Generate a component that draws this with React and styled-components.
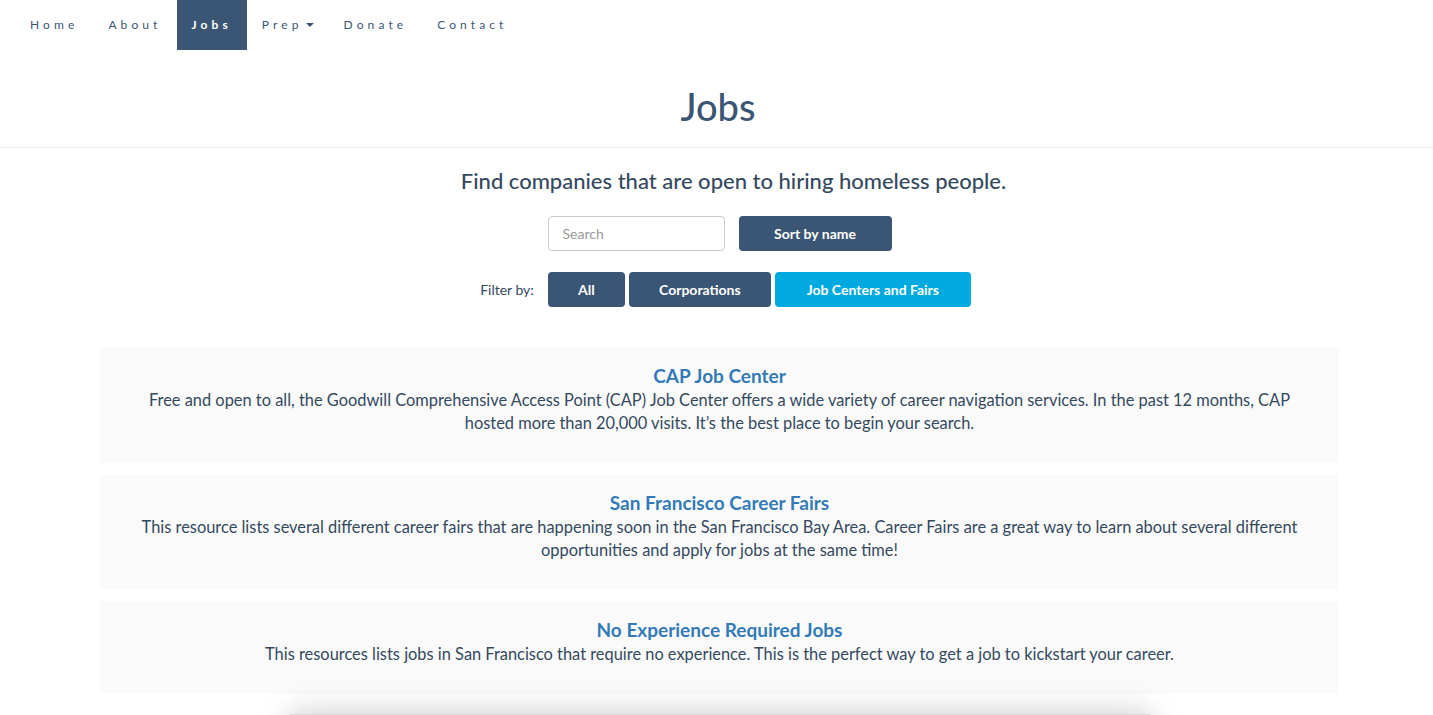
import React from 'react'
import styled, { createGlobalStyle } from 'styled-components'

const GlobalStyle = createGlobalStyle`
  body {
    margin: 0;
    background: #fff;
    font-family: Lato, "Noto Sans", sans-serif;
    color: #34495e;
  }
`

const Nav = styled.nav`
  height: 50px;
  display: flex;
  padding-left: 15px;
`

const NavItem = styled.a`
  display: flex;
  align-items: center;
  padding: 0 15px 2px;
  font-size: 12px;
  letter-spacing: 4.1px;
  color: ${({ active }) => (active ? '#fff' : '#3a5674')};
  background: ${({ active }) => (active ? '#3a5674' : 'transparent')};
  font-weight: ${({ active }) => (active ? 700 : 400)};
  text-decoration: none;
`

const Caret = styled.span`
  display: inline-block;
  margin: 1px 0 0 3px;
  width: 0;
  height: 0;
  border-left: 4px solid transparent;
  border-right: 4px solid transparent;
  border-top: 4px solid #3a5674;
`

const Header = styled.header`
  height: 97px;
  display: flex;
  align-items: center;
  justify-content: center;
  border-bottom: 1px solid #eaeaea;
`

const Title = styled.h1`
  margin: 14px 0 0 3px;
  font-size: 38px;
  font-weight: 500;
  color: #3a5674;
`

const Main = styled.main`
  margin: 0 94px 0 100px;
  display: flex;
  flex-direction: column;
  align-items: center;
`

const Lead = styled.h2`
  margin: 19px 0 0 28px;
  font-size: 22px;
  font-weight: 500;
  color: #34495e;
`

const Controls = styled.div`
  margin-top: 22px;
  display: flex;
  gap: 14px;
`

const SearchInput = styled.input`
  box-sizing: border-box;
  width: 177px;
  height: 35px;
  padding: 0 14px;
  border: 1px solid #ccc;
  border-radius: 4px;
  font-family: inherit;
  font-size: 14px;
  color: #555;
  &::placeholder {
    color: #999;
  }
`

const Button = styled.button`
  height: 35px;
  width: ${({ w }) => w}px;
  border: none;
  border-radius: 4px;
  background: ${({ active }) => (active ? '#00a9e0' : '#3a5674')};
  color: #fff;
  font-family: inherit;
  font-size: 14px;
  font-weight: 700;
`

const FilterRow = styled.div`
  margin: 21px 0 0 12px;
  display: flex;
  align-items: center;
  gap: 4px;
`

const FilterLabel = styled.span`
  font-size: 14px;
  margin-right: 10px;
  color: #34495e;
`

const CardList = styled.div`
  margin-top: 40px;
  align-self: stretch;
  display: flex;
  flex-direction: column;
  gap: 11px;
`

const Card = styled.div`
  background: #fafafa;
  padding: 18px 40px 29px;
  text-align: center;
`

const CardTitle = styled.a`
  display: block;
  font-size: 19px;
  line-height: 22px;
  font-weight: 700;
  color: #337ab7;
  text-decoration: none;
`

const CardText = styled.p`
  margin: 1px auto 0;
  max-width: 1160px;
  font-size: 16.4px;
  line-height: 23px;
  color: #34495e;
`

const Footer = styled.div`
  margin: 20px auto 40px;
  width: 860px;
  height: 120px;
  background: #fff;
  box-shadow: 0 0 30px rgba(0, 0, 0, 0.22);
  border-top: 1px solid #ddd;
`

const items = [
  {
    title: 'CAP Job Center',
    text: 'Free and open to all, the Goodwill Comprehensive Access Point (CAP) Job Center offers a wide variety of career navigation services. In the past 12 months, CAP hosted more than 20,000 visits. It\u2019s the best place to begin your search.'
  },
  {
    title: 'San Francisco Career Fairs',
    text: 'This resource lists several different career fairs that are happening soon in the San Francisco Bay Area. Career Fairs are a great way to learn about several different opportunities and apply for jobs at the same time!'
  },
  {
    title: 'No Experience Required Jobs',
    text: 'This resources lists jobs in San Francisco that require no experience. This is the perfect way to get a job to kickstart your career.'
  }
]

export default function App() {
  return (
    <>
      <GlobalStyle />
      <Nav>
        <NavItem>Home</NavItem>
        <NavItem>About</NavItem>
        <NavItem active>Jobs</NavItem>
        <NavItem>Prep<Caret /></NavItem>
        <NavItem>Donate</NavItem>
        <NavItem>Contact</NavItem>
      </Nav>
      <Header>
        <Title>Jobs</Title>
      </Header>
      <Main>
        <Lead>Find companies that are open to hiring homeless people.</Lead>
        <Controls>
          <SearchInput placeholder="Search" />
          <Button w={153}>Sort by name</Button>
        </Controls>
        <FilterRow>
          <FilterLabel>Filter by:</FilterLabel>
          <Button w={77}>All</Button>
          <Button w={142}>Corporations</Button>
          <Button w={196} active>Job Centers and Fairs</Button>
        </FilterRow>
        <CardList>
          {items.map(item => (
            <Card key={item.title}>
              <CardTitle>{item.title}</CardTitle>
              <CardText>{item.text}</CardText>
            </Card>
          ))}
        </CardList>
        <Footer />
      </Main>
    </>
  )
}
